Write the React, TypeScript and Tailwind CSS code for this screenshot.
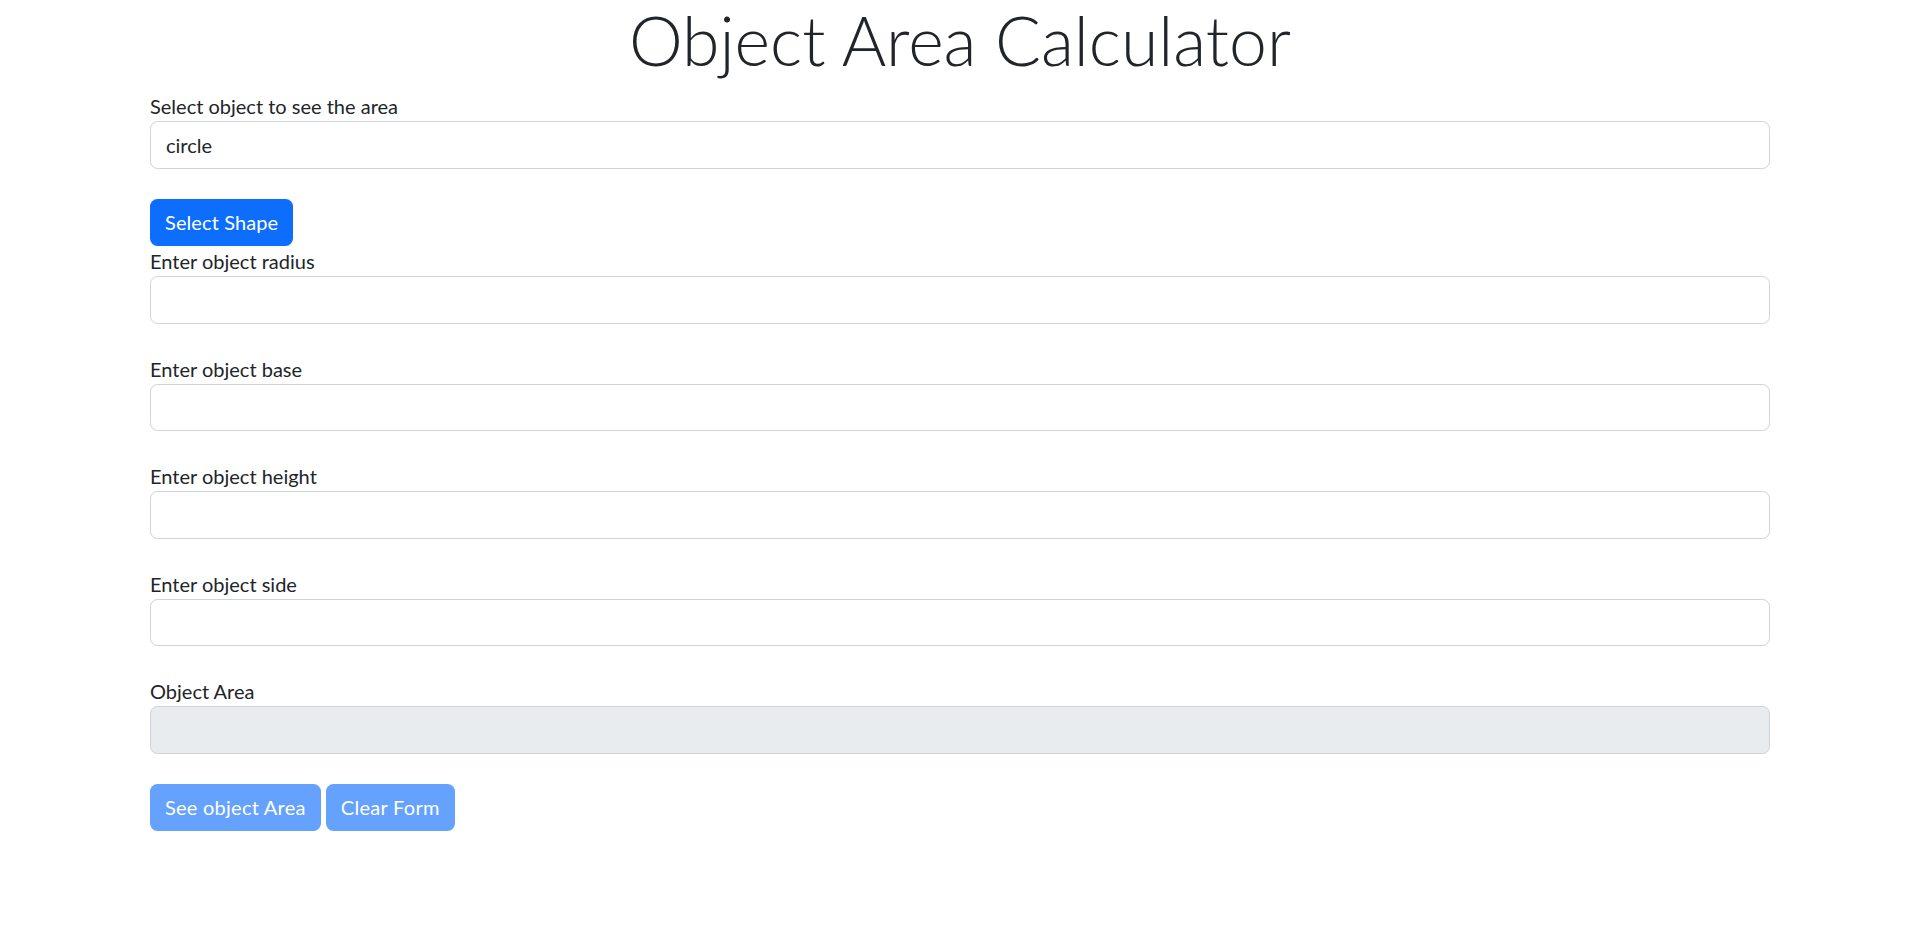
import React from 'react';

const fields = ['Enter object radius', 'Enter object base', 'Enter object height', 'Enter object side'];

const AreaCalculator = () => {
    return (
        <div className="min-h-screen bg-white text-[#212529]" style={{ fontFamily: 'Lato, "Liberation Sans", sans-serif' }}>
            <div className="ml-[150px] w-[1620px]">
                <h1 className="text-center text-[68px] font-light leading-[80px] mb-[11px]">Object Area Calculator</h1>
                <form onSubmit={(e) => e.preventDefault()}>
                    <div className="mb-[30px]">
                        <label className="block text-[20px] leading-[30px]">Select object to see the area</label>
                        <input
                            type="text"
                            defaultValue="circle"
                            className="block w-full h-[47.5px] px-[15px] text-[20px] border border-[#ced4da] rounded-[7.5px] outline-none"
                        />
                    </div>
                    <button type="button" className="block h-[47.5px] px-[15px] text-[20px] tracking-[0.1px] text-white bg-[#0d6efd] rounded-[7.5px]">
                        Select Shape
                    </button>
                    {fields.map((label) => (
                        <div key={label} className="mb-[30px]">
                            <label className="block text-[20px] leading-[30px]">{label}</label>
                            <input
                                type="text"
                                className="block w-full h-[47.5px] px-[15px] text-[20px] border border-[#ced4da] rounded-[7.5px] outline-none"
                            />
                        </div>
                    ))}
                    <div className="mb-[30px]">
                        <label className="block text-[20px] leading-[30px]">Object Area</label>
                        <input
                            type="text"
                            disabled
                            className="block w-full h-[47.5px] px-[15px] text-[20px] border border-[#ced4da] rounded-[7.5px] bg-[#e9ecef] outline-none"
                        />
                    </div>
                    <div className="flex gap-[5px]">
                        <button type="button" className="h-[47.5px] px-[15px] text-[20px] tracking-[0.25px] text-white bg-[#65a2fe] rounded-[7.5px]">
                            See object Area
                        </button>
                        <button type="button" className="h-[47.5px] px-[15px] text-[20px] tracking-[0.3px] text-white bg-[#65a2fe] rounded-[7.5px]">
                            Clear Form
                        </button>
                    </div>
                </form>
            </div>
        </div>
    );
};

export default AreaCalculator;
